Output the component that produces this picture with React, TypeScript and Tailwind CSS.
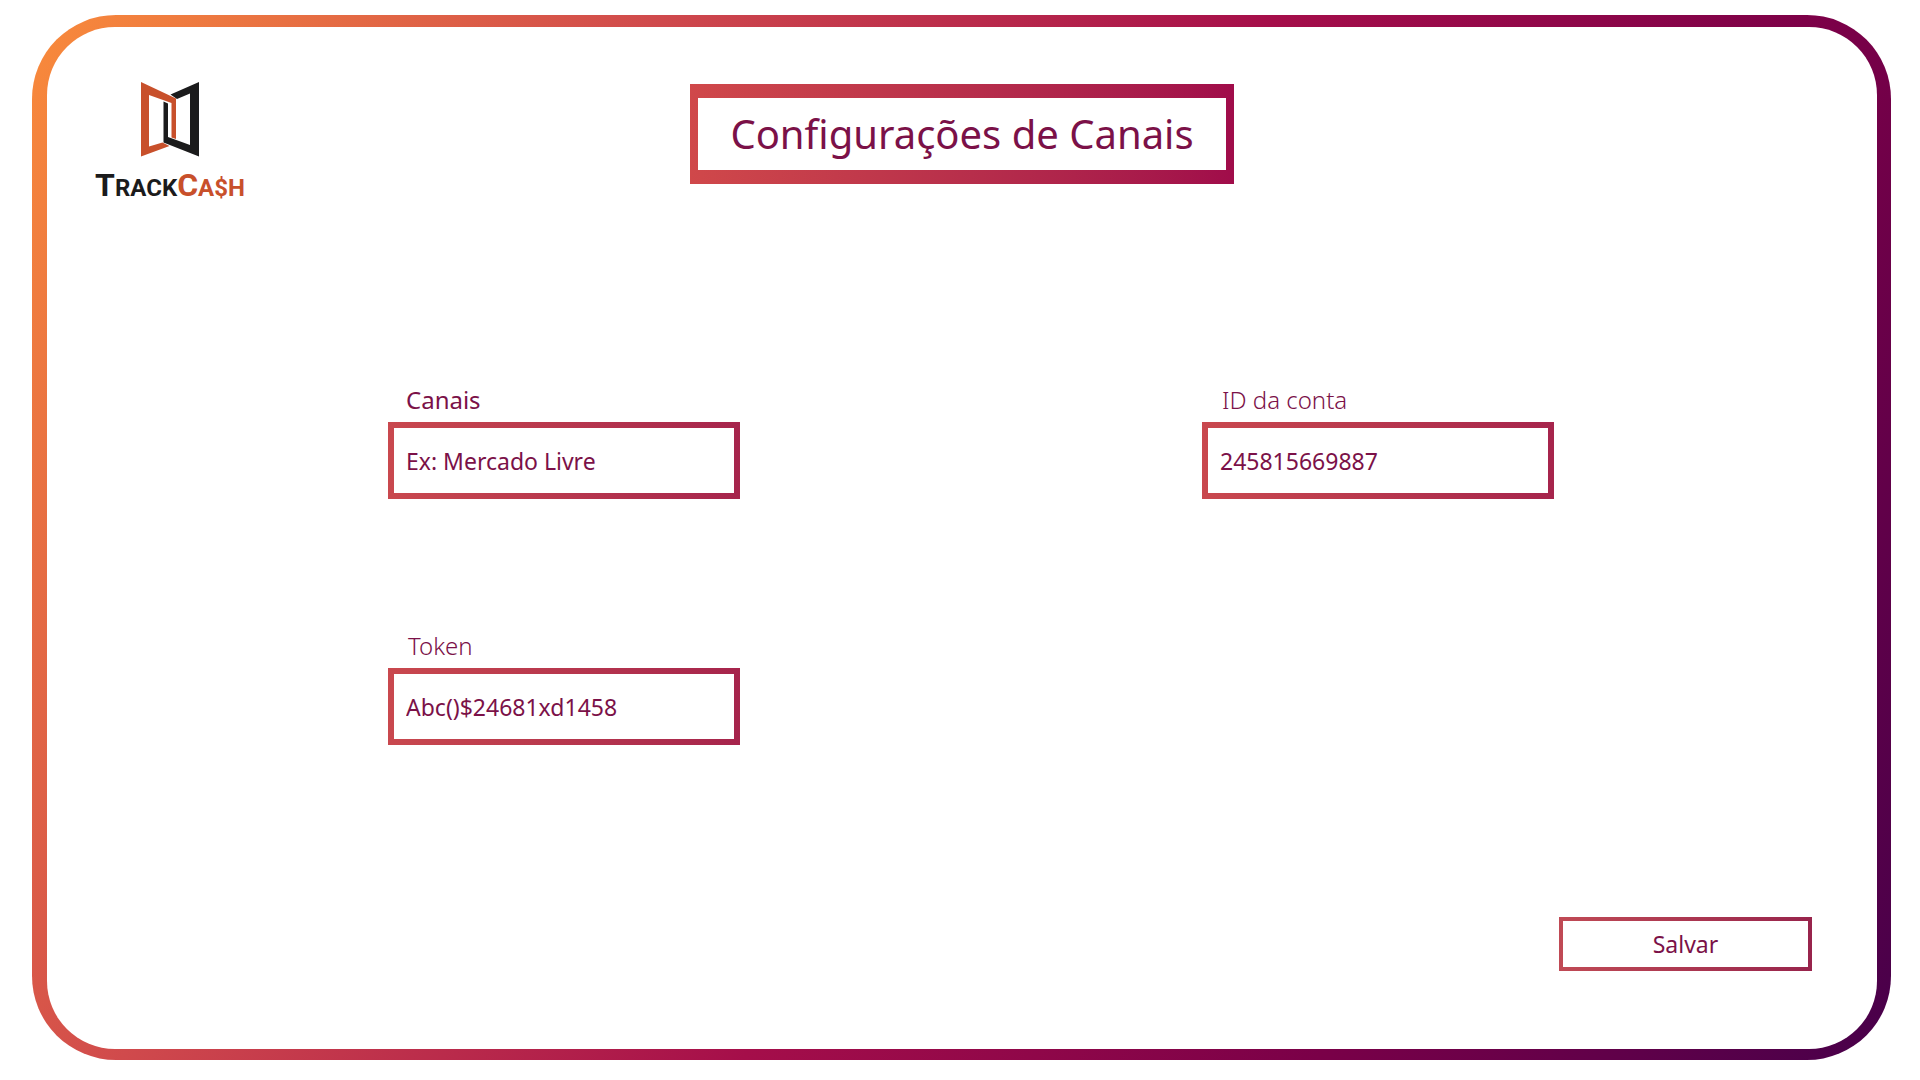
import type { InputHTMLAttributes } from "react";

function Logo() {
  return (
    <div className="flex w-[146px] flex-col items-center">
      <svg viewBox="0 0 58 75" className="h-[75px] w-[58px]" aria-hidden="true">
        <path
          fill="#1b1b1c"
          d="M58 0L29.5 12.5L36 17L49 11.5V63L27 55V21.5L22.5 19.5V60.5L58 74.5Z"
        />
        <path
          fill="#c8502b"
          d="M0 0L35 16.5V57L30.5 55.5V21L8 13V64.5L21.5 60.5L28.5 64L0 74.5Z"
        />
      </svg>
      <p
        className="flex h-14 items-center text-2xl leading-none font-bold whitespace-nowrap text-[#1b1b1c]"
        style={{ fontFamily: "Roboto, sans-serif" }}
      >
        <span>
          <span className="text-[32px]">T</span>RACK
          <span className="text-[#c8502b]">
            <span className="text-[32px]">C</span>A$H
          </span>
        </span>
      </p>
    </div>
  );
}

type FieldProps = InputHTMLAttributes<HTMLInputElement> & {
  id: string;
  label: string;
  strong?: boolean;
};

function Field({ id, label, strong, ...input }: FieldProps) {
  return (
    <div className="flex w-[352px] flex-col gap-2">
      <label
        htmlFor={id}
        className={strong ? "pl-[18px] text-2xl leading-7" : "pl-5 text-2xl leading-7 font-light"}
      >
        {label}
      </label>
      <div className="bg-linear-to-r from-[#c9484e] to-[#a6244c] p-1.5">
        <input
          id={id}
          className="block h-[65px] w-full bg-white px-3 text-[23px] placeholder:text-[#7b1148] placeholder:opacity-100 focus:outline-none"
          {...input}
        />
      </div>
    </div>
  );
}

export default function App() {
  return (
    <div
      className="flex min-h-screen bg-white pt-[15px] pr-[29px] pb-5 pl-8 text-[#7b1148]"
      style={{ fontFamily: '"Noto Sans", sans-serif' }}
    >
      <div className="flex flex-1 rounded-[84px] bg-[linear-gradient(117deg,#f98b3b_0%,#d04a4c_26%,#a50e4a_52%,#7a0048_76%,#48004a_100%)] pt-3 pr-3.5 pb-[11px] pl-[15px]">
        <main className="flex flex-1 flex-col rounded-[68px] bg-white pt-[55px]">
          <header className="grid grid-cols-[1fr_auto_1fr] items-start px-[50px]">
            <Logo />
            <div className="mt-0.5 w-[544px] bg-linear-to-r from-[#d0484a] to-[#a00c4a] px-2 py-3.5">
              <h1 className="bg-white text-center text-[40px] leading-[72px] whitespace-nowrap">
                Configurações de Canais
              </h1>
            </div>
          </header>
          <form className="flex flex-1 flex-col" onSubmit={(e) => e.preventDefault()}>
            <div className="mt-[173px] grid grid-cols-[auto_auto] justify-between gap-y-[133px] pr-[323px] pl-[341px]">
              <Field id="canais" label="Canais" strong placeholder="Ex: Mercado Livre" />
              <Field id="conta" label="ID da conta" defaultValue="245815669887" />
              <Field id="token" label="Token" defaultValue="Abc()$24681xd1458" />
            </div>
            <div className="mt-auto flex justify-end pr-[65px] pb-[78px]">
              <button
                type="submit"
                className="w-[253px] bg-linear-to-r from-[#c04a55] to-[#98244c] p-1 text-[23px]"
              >
                <span className="block bg-white leading-[46px]">Salvar</span>
              </button>
            </div>
          </form>
        </main>
      </div>
    </div>
  );
}
